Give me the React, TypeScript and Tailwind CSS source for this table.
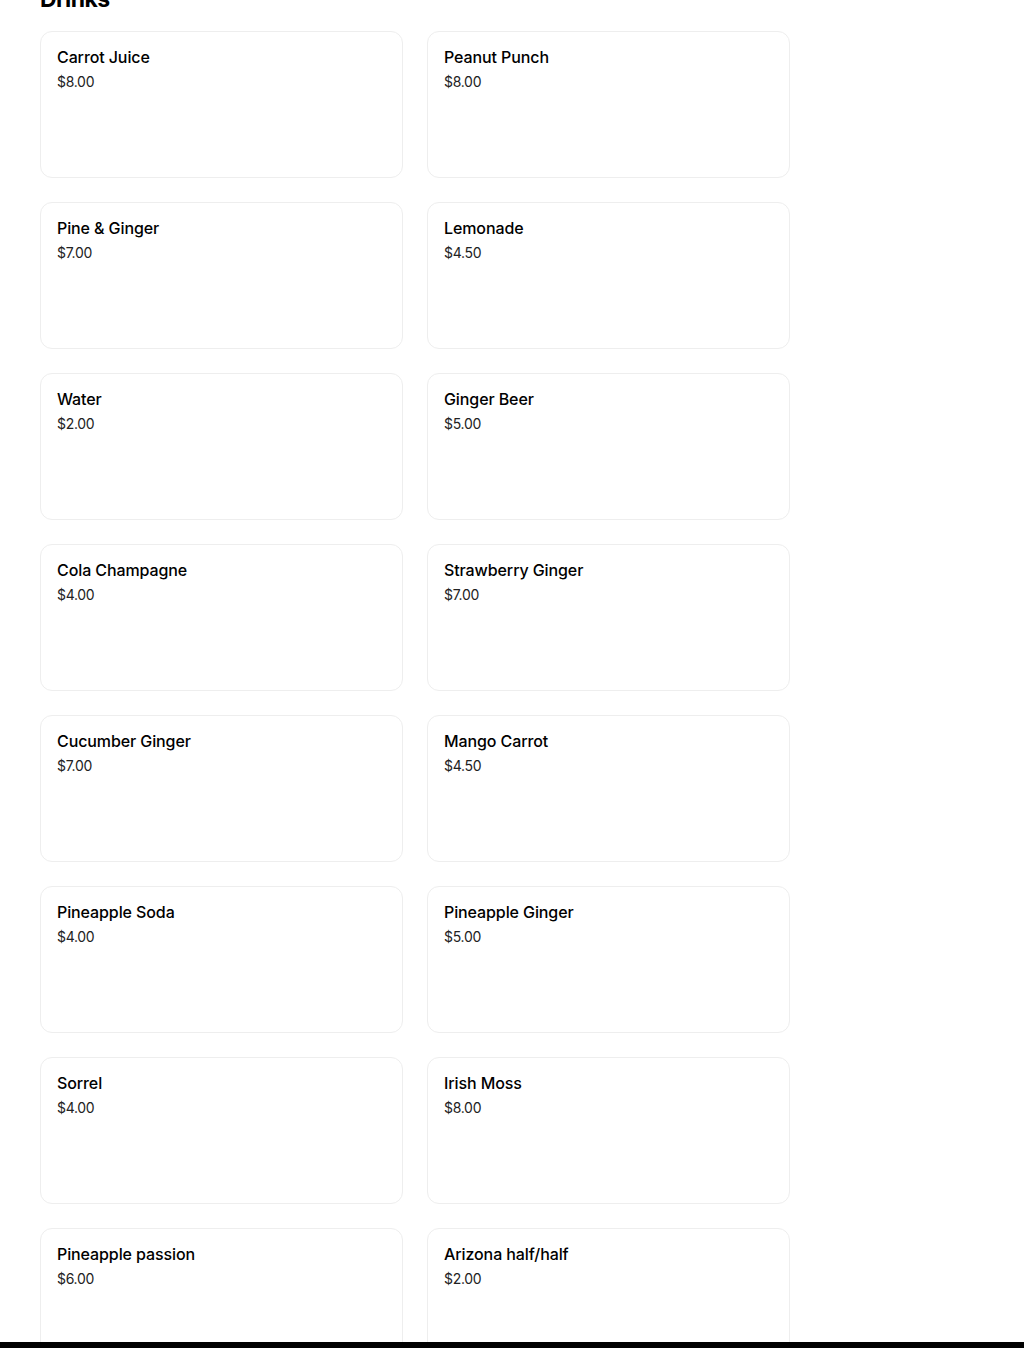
import React from "react";

const items: [string, string][] = [
  ["Carrot Juice", "$8.00"],
  ["Peanut Punch", "$8.00"],
  ["Pine & Ginger", "$7.00"],
  ["Lemonade", "$4.50"],
  ["Water", "$2.00"],
  ["Ginger Beer", "$5.00"],
  ["Cola Champagne", "$4.00"],
  ["Strawberry Ginger", "$7.00"],
  ["Cucumber Ginger", "$7.00"],
  ["Mango Carrot", "$4.50"],
  ["Pineapple Soda", "$4.00"],
  ["Pineapple Ginger", "$5.00"],
  ["Sorrel", "$4.00"],
  ["Irish Moss", "$8.00"],
  ["Pineapple passion", "$6.00"],
  ["Arizona half/half", "$2.00"],
];

export default function App() {
  return (
    <div
      className="h-[1348px] w-[1024px] overflow-hidden bg-white flex flex-col text-black"
      style={{ fontFamily: "Inter, 'Noto Sans', sans-serif" }}
    >
      <div className="flex-1 overflow-hidden px-10">
        <h2 className="-mt-[16px] text-[23px] leading-[30px] font-bold tracking-tight">Drinks</h2>
        <div className="mt-[17px] grid w-[750px] grid-cols-2 gap-6">
          {items.map(([name, price]) => (
            <div
              key={name}
              className="h-[147px] rounded-xl border border-[#eeeeee] px-4 pt-[13px]"
            >
              <div className="text-[16px] leading-[24px] font-medium tracking-[-0.1px]">{name}</div>
              <div className="mt-[3px] text-[14px] leading-[20px] text-[#222] tracking-[-0.3px]">{price}</div>
            </div>
          ))}
        </div>
      </div>
      <div className="h-[6px] bg-black shrink-0" />
    </div>
  );
}
